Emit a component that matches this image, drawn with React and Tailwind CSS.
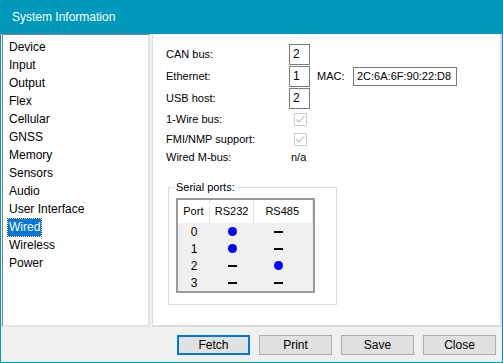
import React from "react";

const items = ["Device","Input","Output","Flex","Cellular","GNSS","Memory","Sensors","Audio","User Interface","Wired","Wireless","Power"];

const Dot = () => <div className="w-[9px] h-[9px] rounded-full bg-[#0000ff]" />;
const Dash = () => <div className="w-[9px] h-[2px] bg-black" />;

const rows = [
  ["0", "dot", "dash"],
  ["1", "dot", "dash"],
  ["2", "dash", "dot"],
  ["3", "dash", "dash"],
];

function Check() {
  return (
    <div className="w-[13px] h-[13px] border border-[#cccccc] bg-white flex items-center justify-center ml-[5px]">
      <svg width="11" height="11" viewBox="0 0 11 11">
        <path d="M1.5 5.5 L4 8 L9.5 2" fill="none" stroke="#bcbcbc" strokeWidth="1.1" />
      </svg>
    </div>
  );
}

function NumBox({ v }) {
  return (
    <div className="w-[21px] h-[21px] border border-[#7a7a7a] bg-white text-[12px] leading-[19px] pl-[3px] text-black">{v}</div>
  );
}

export default function App() {
  return (
    <div className="w-[503px] h-[363px] flex flex-col bg-[#0099bc] font-['Liberation_Sans',Arial,sans-serif] overflow-hidden">
      <div className="h-[34px] flex items-center pl-[12px] text-white text-[12px]">System Information</div>
      <div className="flex-1 flex flex-col mx-[1px] mb-[1px] bg-[#f0f0f0]">
        <div className="h-[293px] flex">
          {/* list */}
          <div className="ml-[1px] w-[148px] h-full bg-white border-l border-t border-[#828282] border-r-2 border-b-2 border-r-[#e3e3e3] border-b-[#e3e3e3] pt-[3px] pl-[6px]">
            {items.map((it) => (
              <div key={it} className="h-[18px] flex items-center text-[12px] text-black">
                {it === "Wired" ? (
                  <span className="bg-[#0078d7] text-white px-[1px] leading-[17px] outline outline-1 outline-dotted outline-[#404040] -ml-[1px]">{it}</span>
                ) : (
                  <span>{it}</span>
                )}
              </div>
            ))}
          </div>
          {/* right panel */}
          <div className="ml-[2px] w-[350px] h-full bg-white border-l border-r-2 border-b-2 border-[#dcdcdc] pl-[13px] pt-[9px] text-[11px] text-black">
            <div className="h-[22px] flex items-center">
              <div className="w-[123px]">CAN bus:</div>
              <NumBox v="2" />
            </div>
            <div className="h-[22px] flex items-center">
              <div className="w-[123px]">Ethernet:</div>
              <NumBox v="1" />
              <div className="ml-[7px] w-[36px]">MAC:</div>
              <div className="w-[104px] h-[19px] border border-[#7a7a7a] text-[11px] leading-[17px] pl-[3px] whitespace-nowrap">2C:6A:6F:90:22:D8</div>
            </div>
            <div className="h-[22px] flex items-center">
              <div className="w-[123px]">USB host:</div>
              <NumBox v="2" />
            </div>
            <div className="h-[20px] flex items-center">
              <div className="w-[123px]">1-Wire bus:</div>
              <Check />
            </div>
            <div className="h-[20px] flex items-center">
              <div className="w-[123px]">FMI/NMP support:</div>
              <Check />
            </div>
            <div className="h-[16px] flex items-center">
              <div className="w-[125px]">Wired M-bus:</div>
              <div>n/a</div>
            </div>
            {/* group box */}
            <div className="relative mt-[22px] ml-[2px] w-[169px] h-[118px] border border-[#dcdcdc]">
              <div className="absolute -top-[8px] left-[6px] bg-white px-[1px] leading-[14px]">Serial ports:</div>
              <div className="mt-[10px] ml-[7px] w-[139px] h-[95px] border-2 border-[#9a9a9a] bg-[#f0f0f0] flex flex-col">
                <div className="h-[24px] bg-white flex text-[11px]">
                  <div className="w-[32px] flex items-center justify-center border-r border-[#e5e5e5]">Port</div>
                  <div className="w-[45px] flex items-center justify-center border-r border-[#e5e5e5]">RS232</div>
                  <div className="w-[59px] flex items-center justify-center pr-[2px] border-r border-[#e5e5e5]">RS485</div>
                </div>
                {rows.map((r) => (
                  <div key={r[0]} className="h-[17px] flex items-center text-[12px]">
                    <div className="w-[32px] text-center">{r[0]}</div>
                    <div className="w-[45px] flex justify-center">{r[1] === "dot" ? <Dot /> : <Dash />}</div>
                    <div className="w-[46px] flex justify-center">{r[2] === "dot" ? <Dot /> : <Dash />}</div>
                  </div>
                ))}
              </div>
            </div>
          </div>
        </div>
        {/* buttons */}
        <div className="flex-1 flex justify-end items-start pt-[8px] pr-[6px] gap-[9px] text-[12px] text-black">
          <div className="w-[73px] h-[20px] border-2 border-[#0078d7] bg-[#e1e1e1] flex items-center justify-center">Fetch</div>
          <div className="w-[73px] h-[20px] border border-[#adadad] bg-[#e1e1e1] flex items-center justify-center">Print</div>
          <div className="w-[73px] h-[20px] border border-[#adadad] bg-[#e1e1e1] flex items-center justify-center">Save</div>
          <div className="w-[73px] h-[20px] border border-[#adadad] bg-[#e1e1e1] flex items-center justify-center">Close</div>
        </div>
      </div>
    </div>
  );
}
